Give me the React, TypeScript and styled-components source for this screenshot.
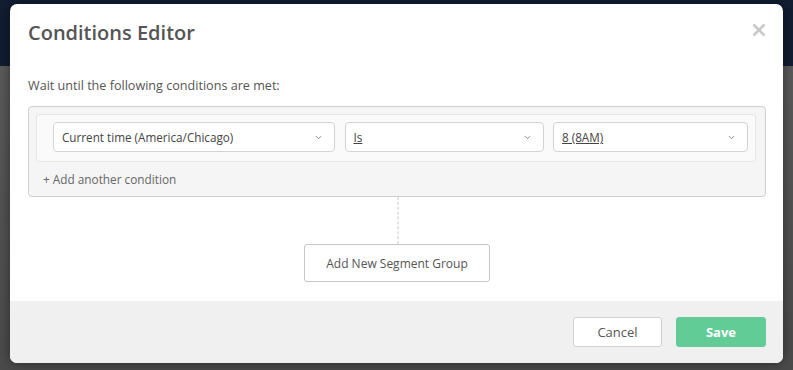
import styled, { createGlobalStyle } from 'styled-components';

const GlobalStyle = createGlobalStyle`
  html, body {
    margin: 0;
    padding: 0;
    width: 793px;
    height: 370px;
    overflow: hidden;
  }
  body {
    font-family: 'Open Sans', 'Liberation Sans', sans-serif;
  }
`;

const Backdrop = styled.div`
  width: 793px;
  height: 370px;
  background: linear-gradient(#121d33 0, #121d33 66px, #5a5a5a 66px, #4a4a4a 100%);
  padding: 4px 10px 0;
  box-sizing: border-box;
`;

const Modal = styled.div`
  width: 773px;
  height: 359px;
  background: #fff;
  border-radius: 7px;
  overflow: hidden;
  display: flex;
  flex-direction: column;
  box-shadow: 0 0 12px rgba(0, 0, 0, 0.45);
`;

const Header = styled.header`
  position: relative;
  padding: 15px 18px 0;
  height: 58px;
  box-sizing: border-box;
`;

const Title = styled.h2`
  margin: 0;
  font-size: 20px;
  line-height: 27px;
  font-weight: 600;
  color: #555;
`;

const CloseButton = styled.button`
  position: absolute;
  top: 19px;
  right: 17px;
  width: 14px;
  height: 14px;
  padding: 0;
  border: 0;
  background: none;
  display: flex;
`;

const Body = styled.section`
  flex: 1;
  padding: 15px 17px 0 18px;
  display: flex;
  flex-direction: column;
`;

const Intro = styled.p`
  margin: 0 0 11px;
  font-size: 12.6px;
  line-height: 18px;
  color: #555;
`;

const ConditionBox = styled.div`
  border: 1px solid #cfcfcf;
  border-radius: 4px;
  background: #f5f5f5;
  padding: 7px 9px 8px 7px;
`;

const ConditionRow = styled.div`
  display: grid;
  grid-template-columns: 282px 199px 1fr;
  gap: 9.5px;
  padding: 7px 7px 9px 16px;
  border: 1px solid #e6e6e6;
  border-radius: 3px;
  background: #fafafa;
`;

const Select = styled.div<{ $underline?: boolean }>`
  height: 30px;
  box-sizing: border-box;
  border: 1px solid #d3d3d3;
  border-radius: 4px;
  background: #fff;
  display: flex;
  align-items: center;
  justify-content: space-between;
  padding: 0 12px 0 8px;
  font-size: 11.7px;
  color: #444;
  text-decoration: ${(p) => (p.$underline ? 'underline' : 'none')};
`;

const Chevron = styled.svg`
  width: 7px;
  height: 5px;
  flex: none;
`;

const AddCondition = styled.div`
  margin-top: 9px;
  padding-left: 7px;
  font-size: 11.8px;
  line-height: 17px;
  color: #666;
`;

const Connector = styled.div`
  align-self: center;
  width: 0;
  height: 47px;
  border-left: 1px dashed #c8c8c8;
  transform: translateX(0.5px);
`;

const SegmentButton = styled.button`
  align-self: center;
  width: 186px;
  height: 38px;
  border: 1px solid #c6c6c6;
  border-radius: 3px;
  background: #fff;
  font-family: inherit;
  font-size: 12px;
  color: #555;
`;

const Footer = styled.footer`
  height: 62px;
  background: #f0f0f0;
  display: flex;
  justify-content: flex-end;
  align-items: flex-start;
  gap: 14px;
  padding: 16px 17px 0 0;
  box-sizing: border-box;
`;

const FooterButton = styled.button<{ $primary?: boolean }>`
  width: ${(p) => (p.$primary ? '90px' : '89px')};
  height: 30px;
  border-radius: 3px;
  font-family: inherit;
  font-size: 13px;
  border: 1px solid ${(p) => (p.$primary ? '#62cc97' : '#cfcfcf')};
  background: ${(p) => (p.$primary ? '#62cc97' : '#fff')};
  color: ${(p) => (p.$primary ? '#fff' : '#555')};
  font-weight: ${(p) => (p.$primary ? 700 : 400)};
`;

const ChevronIcon = () => (
  <Chevron viewBox="0 0 7 5">
    <path d="M1 1.2 L3.5 3.7 L6 1.2" fill="none" stroke="#888" strokeWidth="1" />
  </Chevron>
);

export default function App() {
  return (
    <>
      <GlobalStyle />
      <Backdrop>
        <Modal>
          <Header>
            <Title>Conditions Editor</Title>
            <CloseButton aria-label="Close">
              <svg width="14" height="14" viewBox="0 0 14 14">
                <path d="M1.5 1.5 L12.5 12.5 M12.5 1.5 L1.5 12.5" stroke="#c8c8c8" strokeWidth="2.6" strokeLinecap="butt" />
              </svg>
            </CloseButton>
          </Header>
          <Body>
            <Intro>Wait until the following conditions are met:</Intro>
            <ConditionBox>
              <ConditionRow>
                <Select>
                  <span>Current time (America/Chicago)</span>
                  <ChevronIcon />
                </Select>
                <Select $underline>
                  <span>Is</span>
                  <ChevronIcon />
                </Select>
                <Select $underline>
                  <span>8 (8AM)</span>
                  <ChevronIcon />
                </Select>
              </ConditionRow>
              <AddCondition>+ Add another condition</AddCondition>
            </ConditionBox>
            <Connector />
            <SegmentButton>Add New Segment Group</SegmentButton>
          </Body>
          <Footer>
            <FooterButton>Cancel</FooterButton>
            <FooterButton $primary>Save</FooterButton>
          </Footer>
        </Modal>
      </Backdrop>
    </>
  );
}
